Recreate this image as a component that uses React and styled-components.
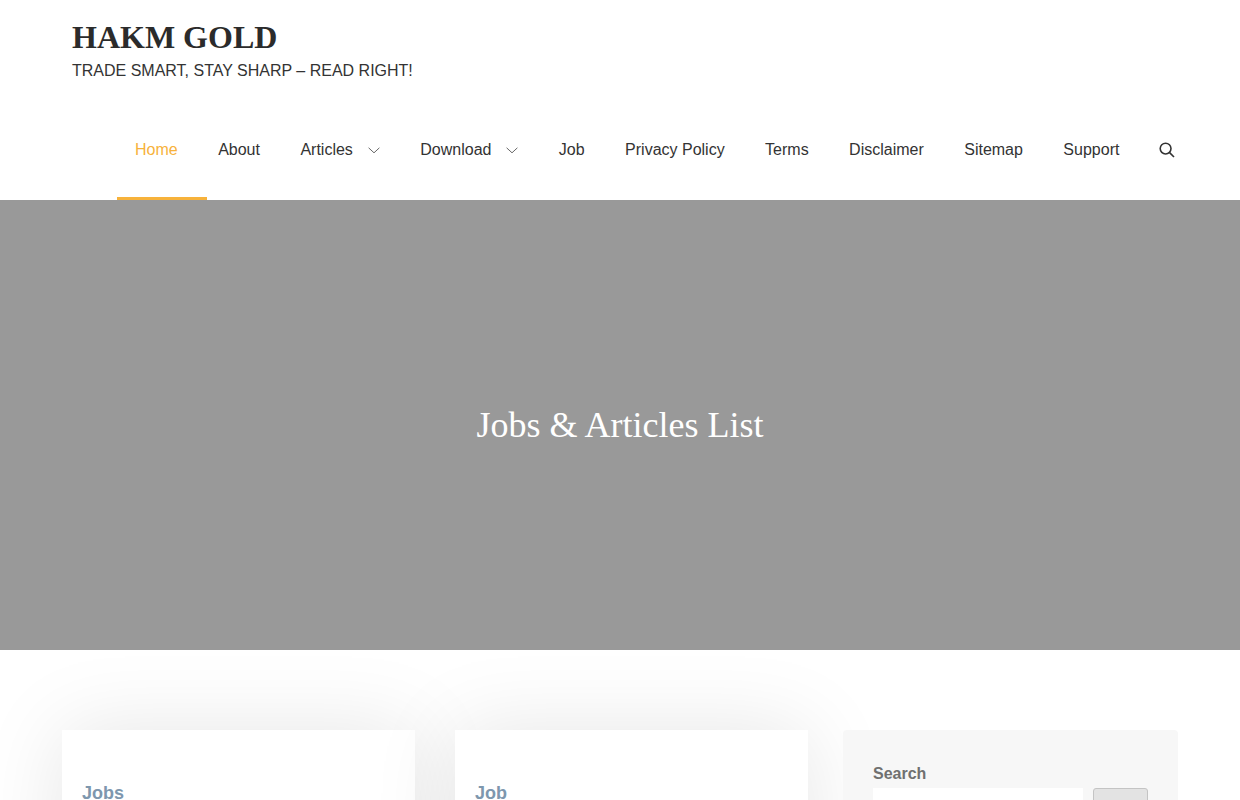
import React from "react";
import styled, { createGlobalStyle } from "styled-components";

const Global = createGlobalStyle`
  html, body { margin: 0; padding: 0; background: #fff; overflow: hidden; }
  * { box-sizing: border-box; }
`;

const Page = styled.div`
  height: 800px;
  overflow: hidden;
  font-family: "Liberation Sans", Arial, sans-serif;
  color: #333;
`;

const Header = styled.header`
  height: 200px;
  padding: 18px 65px 0 72px;
  display: flex;
  flex-direction: column;
`;

const Brand = styled.h1`
  margin: 0;
  font: bold 32px/38px "Liberation Serif", "Times New Roman", serif;
  color: #2b2b2b;
`;

const Tagline = styled.p`
  margin: 5px 0 0;
  font-size: 16px;
  line-height: 19px;
  color: #333;
`;

const Nav = styled.nav`
  margin: 60px 0 0 63px;
  display: flex;
  align-items: center;
  gap: 40.44px;
  height: 19px;
`;

const NavItem = styled.a`
  position: relative;
  display: inline-flex;
  align-items: center;
  gap: 15px;
  font-size: 16px;
  line-height: 19px;
  white-space: nowrap;
  color: ${(p) => (p.$active ? "#f7b23b" : "#333")};
`;

const ActiveBar = styled.span`
  position: absolute;
  left: -18px;
  top: 57px;
  width: 90px;
  height: 3px;
  background: #f7b23b;
`;

const CaretIcon = styled.svg`
  margin-top: 2px;
`;

const SearchButton = styled.span`
  display: inline-flex;
  margin: 1px 0 0 -1px;
  color: #333;
`;

const Hero = styled.section`
  height: 450px;
  background: #999;
  display: flex;
  align-items: center;
  justify-content: center;
`;

const HeroTitle = styled.h2`
  margin: 0;
  font: normal 36px/50px "Liberation Serif", "Times New Roman", serif;
  color: #fff;
`;

const Main = styled.main`
  display: flex;
  padding: 80px 62px 0;
  gap: 35px;
  align-items: flex-start;
`;

const Cards = styled.div`
  display: flex;
  gap: 40px;
`;

const Card = styled.article`
  width: 353px;
  min-height: 400px;
  padding: 52px 20px 0;
  background: #fff;
  box-shadow: 0 0 80px rgba(0, 0, 0, 0.1);
`;

const CardTitle = styled.h3`
  margin: 0;
  font-size: 18px;
  line-height: 22px;
  font-weight: bold;
  color: #7e97ae;
`;

const Sidebar = styled.aside`
  width: 335px;
  min-height: 300px;
  padding: 34px 30px 0;
  background: #f7f7f7;
  border-radius: 4px;
`;

const SearchLabel = styled.label`
  display: block;
  font-size: 16px;
  line-height: 19px;
  font-weight: bold;
  color: #707070;
`;

const SearchRow = styled.div`
  display: flex;
  gap: 10px;
  margin-top: 5px;
`;

const SearchInput = styled.div`
  width: 210px;
  height: 36px;
  background: #fff;
`;

const SearchSubmit = styled.div`
  width: 55px;
  height: 36px;
  background: #e3e3e3;
  border: 1px solid #c4c4c4;
  border-radius: 3px;
`;

const Chevron = () => (
  <CaretIcon width="12" height="7" viewBox="0 0 12 7" fill="none" stroke="#666" strokeWidth="1">
    <path d="M0.6 0.8 L6 5.8 L11.4 0.8" />
  </CaretIcon>
);

const SearchIcon = () => (
  <svg width="16" height="16" viewBox="0 0 16 16" fill="none" stroke="currentColor" strokeWidth="1.6">
    <circle cx="6.6" cy="6.6" r="5.4" />
    <path d="M10.6 10.6 L15 15" />
  </svg>
);

const items = [
  { label: "Home", active: true },
  { label: "About" },
  { label: "Articles", caret: true },
  { label: "Download", caret: true },
  { label: "Job" },
  { label: "Privacy Policy" },
  { label: "Terms" },
  { label: "Disclaimer" },
  { label: "Sitemap" },
  { label: "Support" },
];

export default function App() {
  return (
    <Page>
      <Global />
      <Header>
        <Brand>HAKM GOLD</Brand>
        <Tagline>TRADE SMART, STAY SHARP – READ RIGHT!</Tagline>
        <Nav>
          {items.map((it) => (
            <NavItem key={it.label} $active={it.active}>
              {it.label}
              {it.caret && <Chevron />}
              {it.active && <ActiveBar />}
            </NavItem>
          ))}
          <SearchButton>
            <SearchIcon />
          </SearchButton>
        </Nav>
      </Header>
      <Hero>
        <HeroTitle>Jobs &amp; Articles List</HeroTitle>
      </Hero>
      <Main>
        <Cards>
          <Card>
            <CardTitle>Jobs</CardTitle>
          </Card>
          <Card>
            <CardTitle>Job</CardTitle>
          </Card>
        </Cards>
        <Sidebar>
          <SearchLabel>Search</SearchLabel>
          <SearchRow>
            <SearchInput />
            <SearchSubmit />
          </SearchRow>
        </Sidebar>
      </Main>
    </Page>
  );
}
